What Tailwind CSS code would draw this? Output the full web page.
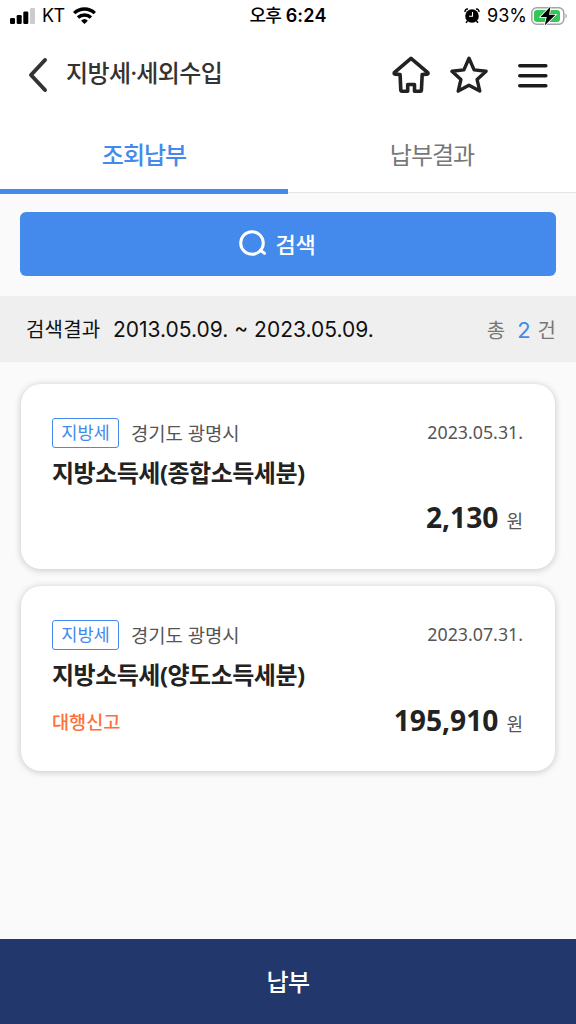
<!DOCTYPE html>
<html lang="ko">
<head>
    <meta charset="UTF-8">
    <meta name="viewport" content="width=device-width, initial-scale=1.0">
    <title>지방세·세외수입</title>
    <script src="https://cdn.jsdelivr.net/npm/@tailwindcss/browser@4"></script>
</head>
<body class="bg-[#fafafa] font-['Noto_Sans','Noto_Sans_CJK_KR',sans-serif] text-[#222]">
    <div class="flex flex-col w-[576px] h-[1024px] overflow-hidden">

        <!-- Status bar -->
        <div class="grid grid-cols-3 h-8 shrink-0 bg-white text-black font-['Inter','Noto_Sans_CJK_KR',sans-serif]">
            <div class="flex items-center pl-[10px]">
                <svg class="-mt-px w-[25px] h-4" viewBox="0 0 25 16">
                    <rect x="0" y="10" width="5" height="6" rx="1.3"/>
                    <rect x="6.7" y="7" width="5" height="9" rx="1.3"/>
                    <rect x="13.3" y="3.5" width="5" height="12.5" rx="1.3"/>
                    <rect x="20" y="0" width="5" height="16" rx="1.3" fill="#ccc"/>
                </svg>
                <span class="ml-[7px] w-[23px] text-[18px] tracking-[-0.5px] leading-8">KT</span>
                <svg class="ml-2 -mt-0.5 w-[23px] h-[17px]" viewBox="0 0 23 17" fill="none" stroke="#000" stroke-width="3.4">
                    <path d="M1.2 6.1a14.8 14.8 0 0 1 20.6 0"/>
                    <path d="M5 10.6a9.4 9.4 0 0 1 13 0"/>
                    <path d="M11.5 17l-3.4-3.3a5 5 0 0 1 6.8 0z" fill="#000" stroke="none"/>
                </svg>
            </div>
            <div class="text-center text-[18px] leading-8 font-semibold tracking-[0.2px]">
                <span class="font-medium tracking-[-0.8px]">오후</span> 6:24
            </div>
            <div class="flex items-center justify-end pr-[9px]">
                <svg class="-mt-px w-4 h-4" viewBox="0 0 16 16">
                    <path d="M1.2 4a2.2 2.2 0 0 1 2.8-2.8M12 1.2a2.2 2.2 0 0 1 2.8 2.8M3.5 13l-1.500 1.800M12.500 13l1.500 1.800" fill="none" stroke="#000" stroke-width="1.5"/>
                    <circle cx="8" cy="8" r="6.8"/>
                    <path d="M8.500 4v4.300H5" fill="none" stroke="#fff" stroke-width="1.1"/>
                </svg>
                <span class="ml-[7px] w-[40px] text-[18px] leading-8 whitespace-nowrap">93%</span>
                <svg class="ml-[4px] -mt-px w-[36px] h-5" viewBox="0 0 36 20">
                    <rect x="0.8" y="1.8" width="32" height="16.5" rx="5" fill="none" stroke="#a3a3a3" stroke-width="1.5"/>
                    <rect x="3" y="4" width="26" height="12" rx="3" fill="#33c759"/>
                    <path d="M34.500 7.500a3 3 0 0 1 0 5z" fill="#a3a3a3"/>
                    <path d="M19.500 0.500L9.500 11h6.200l-2 8.500L24.500 8.800h-6.400z" stroke="#fff" stroke-width="1.6" paint-order="stroke"/>
                </svg>
            </div>
        </div>

        <!-- Header -->
        <header class="flex items-center h-[86px] shrink-0 bg-white pl-[28px] pr-[27px]">
            <svg class="-mt-px w-5 h-9" viewBox="0 0 20 36" fill="none" stroke="#333" stroke-width="4" stroke-linecap="round" stroke-linejoin="round">
                <path d="M17 3L3 18L17 33"/>
            </svg>
            <h1 class="ml-[18px] -mt-1 text-[24px] leading-9 font-medium tracking-[-0.6px] text-[#333]">지방세·세외수입</h1>
            <div class="flex items-center -mt-0.5 ml-auto">
                <svg class="w-10 h-10" viewBox="0 0 40 40" fill="none" stroke="#222" stroke-width="3.6" stroke-linecap="round" stroke-linejoin="round">
                    <path d="M20 4.300L3.300 18.600q-.5 1.200.6 1.500l5.200.4.700 15.900q.2.900 1.200.9h5.700v-6.800h6.800v6.800h5.900q.9 0 1-1l.8-15.800 5.200-.4q1.100-.4.400-1.500z"/>
                </svg>
                <svg class="ml-[18px] w-10 h-10" viewBox="0 0 40 40" fill="none" stroke="#222" stroke-width="3.4" stroke-linejoin="round">
                    <path d="M20 4.300l5.100 11.600 12 1.400-9 8.300 2.700 11.500L20 31.200 9.200 37.100l2.700-11.500-9-8.300 12-1.400z"/>
                </svg>
                <svg class="ml-[27px] w-[33px] h-10" viewBox="0 0 33 40" fill="none" stroke="#1c1c1c" stroke-width="3.6" stroke-linecap="round">
                    <path d="M3.800 11.800h26M3.800 21.800h26M3.800 31.800h26"/>
                </svg>
            </div>
        </header>

        <!-- Tabs -->
        <nav class="grid grid-cols-2 h-[76px] shrink-0 text-center text-[24px] leading-[71px] tracking-[-1px]">
            <div class="h-[75.5px] border-b-[5px] border-[#448aed] bg-white pt-px font-medium text-[#448aed]">조회납부</div>
            <div class="h-[75px] border-b border-[#e4e4e4] bg-white pt-px text-[#777]">납부결과</div>
        </nav>

        <!-- Search button -->
        <div class="px-5 pt-[18px] pb-5 shrink-0">
            <button class="flex items-center justify-center w-full h-16 rounded-[6px] bg-[#448aed] pr-[22px] text-white">
                <svg class="w-7 h-7" viewBox="0 0 28 28" fill="none" stroke="#fff" stroke-width="3" stroke-linecap="round">
                    <circle cx="13" cy="13" r="11.3"/>
                    <path d="M21.500 20.500l4 2.800"/>
                </svg>
                <span class="-mt-px ml-[9px] text-[22px] leading-8 font-medium tracking-[-0.3px]">검색</span>
            </button>
        </div>

        <!-- Result summary -->
        <div class="flex items-center h-[66px] shrink-0 pl-[26px] pr-5 bg-[#efefef] text-[20px] text-[#111] font-['Inter','Noto_Sans_CJK_KR',sans-serif]">
            <span class="w-[87px] mt-0.5 tracking-[0.2px]">검색결과</span>
            <span class="mt-0.5 text-[21px] whitespace-nowrap">2013.05.09. ~ 2023.05.09.</span>
            <span class="ml-auto mt-1 text-[#777]">총</span>
            <span class="ml-3 mt-0.5 text-[22px] text-[#448aed]">2</span>
            <span class="ml-[7px] mt-1 text-[#777]">건</span>
        </div>

        <!-- Bills -->
        <main class="flex flex-col gap-[18px] grow px-[21px] pt-[22px]">
            <section class="h-[184.5px] rounded-[20px] bg-white pl-[31px] pr-8 pt-[34px] shadow-[0_1px_6px_1px_rgba(0,0,0,0.17)]">
                <div class="flex h-[30px]">
                    <span class="w-[67px] h-[30px] rounded-[3px] border-[1.5px] border-[#448aed] text-center text-[17.6px] leading-[27px] text-[#448aed]">지방세</span>
                    <span class="ml-3 text-[18.8px] leading-[33px] text-[#555]">경기도 광명시</span>
                    <span class="ml-auto text-[17.8px] leading-[28px] text-[#555]">2023.05.31.</span>
                </div>
                <h2 class="mt-2 text-[24px] leading-[34px] font-bold tracking-[-0.5px]">지방소득세(종합소득세분)</h2>
                <div class="flex items-baseline mt-[7px] leading-[40px]">
                    <strong class="ml-auto text-[28.2px] font-bold">2,130</strong>
                    <span class="ml-2 text-[18px] text-[#555]">원</span>
                </div>
            </section>

            <section class="-mt-px h-[185px] rounded-[20px] bg-white pl-[31px] pr-8 pt-[34px] shadow-[0_1px_6px_1px_rgba(0,0,0,0.17)]">
                <div class="flex h-[30px]">
                    <span class="w-[67px] h-[30px] rounded-[3px] border-[1.5px] border-[#448aed] text-center text-[17.6px] leading-[27px] text-[#448aed]">지방세</span>
                    <span class="ml-3 text-[18.8px] leading-[33px] text-[#555]">경기도 광명시</span>
                    <span class="ml-auto text-[17.8px] leading-[28px] text-[#555]">2023.07.31.</span>
                </div>
                <h2 class="mt-2 text-[24px] leading-[34px] font-bold tracking-[-0.5px]">지방소득세(양도소득세분)</h2>
                <div class="flex items-start mt-2 leading-[40px]">
                    <span class="mt-0.5 text-[18.6px] font-medium text-[#ff6f3c]">대행신고</span>
                    <div class="flex items-baseline ml-auto">
                        <strong class="text-[28.2px] font-bold">195,910</strong>
                        <span class="ml-2 text-[18px] text-[#555]">원</span>
                    </div>
                </div>
            </section>
        </main>

        <!-- Pay button -->
        <button class="h-[85px] shrink-0 bg-[#22376b] text-[24px] font-medium tracking-[-0.5px] text-white">납부</button>
    </div>
</body>
</html>
